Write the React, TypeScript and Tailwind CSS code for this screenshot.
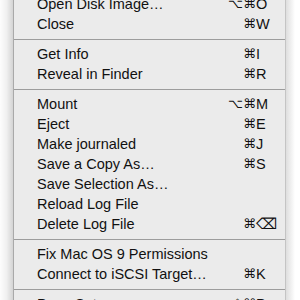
import React from "react";

type Item =
  | { sep: true }
  | { sep?: false; label: string; mods?: string; k?: React.ReactNode };

const items: Item[] = [
  { label: "Open Disk Image…", mods: "⌥⌘", k: "O" },
  { label: "Close", mods: "⌘", k: "W" },
  { sep: true },
  { label: "Get Info", mods: "⌘", k: "I" },
  { label: "Reveal in Finder", mods: "⌘", k: "R" },
  { sep: true },
  { label: "Mount", mods: "⌥⌘", k: "M" },
  { label: "Eject", mods: "⌘", k: "E" },
  { label: "Make journaled", mods: "⌘", k: "J" },
  { label: "Save a Copy As…", mods: "⌘", k: "S" },
  { label: "Save Selection As…" },
  { label: "Reload Log File" },
  { label: "Delete Log File", mods: "⌘", k: "⌫" },
  { sep: true },
  { label: "Fix Mac OS 9 Permissions" },
  { label: "Connect to iSCSI Target…", mods: "⌘", k: "K" },
  { sep: true },
  { label: "Page Setup…", mods: "⇧⌘", k: "P" },
];

export default function App() {
  return (
    <div className="w-[300px] h-[300px] overflow-hidden bg-white flex">
      <div className="w-[13px] h-full bg-gradient-to-r from-[#fdfdfd] via-[#f0f0f0] to-[#d4d4d4]" />
      <div
        className="w-[273px] h-full bg-[#ebebeb] border-l border-r border-l-[#a9a9a9] border-r-[#c4c4c4] text-[#111] text-[14.5px]"
        style={{ fontFamily: '"Liberation Sans", Arial, sans-serif' }}
      >
        <div className="-mt-[6px] flex flex-col">
          {items.map((it, i) =>
            it.sep ? (
              <div key={i} className="h-[10px] flex items-center">
                <div className="h-px w-full bg-[#9c9c9c]" />
              </div>
            ) : (
              <div key={i} className="h-[20px] leading-[20px] flex items-center pl-[23px] whitespace-nowrap">
                <span className="flex-1">{it.label}</span>
                <span className="text-right" style={{ fontFamily: '"DejaVu Sans", sans-serif', fontSize: 13 }}>
                  {it.mods}
                </span>
                <span className="w-[29px]">{it.k}</span>
              </div>
            )
          )}
        </div>
      </div>
      <div className="w-[9px] h-full bg-gradient-to-r from-[#dedede] to-white" />
    </div>
  );
}
